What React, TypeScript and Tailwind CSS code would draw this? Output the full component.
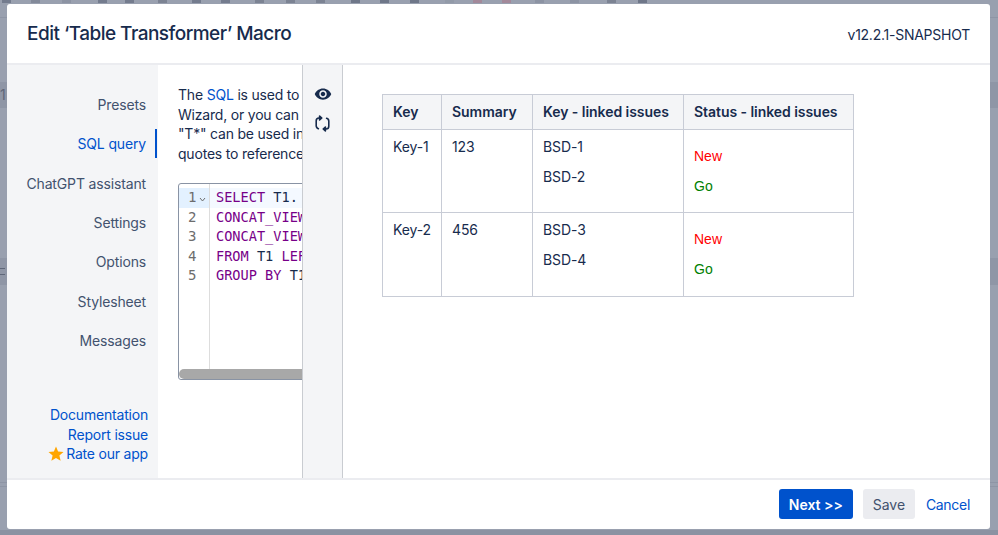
import { MdStar, MdVisibility } from "react-icons/md";

const navItems = ["Presets", "SQL query", "ChatGPT assistant", "Settings", "Options", "Stylesheet", "Messages"];

const codeLines = [
  [["SELECT", "text-[#770088]"], [" T1.", "text-[#172b4d]"]],
  [["CONCAT_VIEW", "text-[#770088]"]],
  [["CONCAT_VIEW", "text-[#770088]"]],
  [["FROM", "text-[#770088]"], [" T1 ", "text-[#172b4d]"], ["LEFT", "text-[#770088]"]],
  [["GROUP BY", "text-[#770088]"], [" T1", "text-[#172b4d]"]],
];

const rows = [
  { key: "Key-1", summary: "123", linked: ["BSD-1", "BSD-2"], height: "h-[83px]" },
  { key: "Key-2", summary: "456", linked: ["BSD-3", "BSD-4"], height: "h-[84px]" },
];

// page toolbar showing through the overlay above the dialog
const toolbarIcons = [
  "ml-[2px] bg-[#747c8e]",
  "ml-[20px] bg-[#838a9a]",
  "ml-[22px] bg-[#8c93a3]",
  "ml-[27px] bg-[#747c8e]",
  "ml-[18px] bg-[#747c8e]",
  "ml-[24px] bg-[#7c8393]",
  "ml-[25px] bg-[#747c8e]",
  "ml-[20px] bg-[#747c8e]",
  "ml-[25px] bg-[#7c8393]",
  "ml-[22px] bg-[#7c8393]",
  "ml-[21px] bg-[#7c8393]",
  "ml-[26px] bg-[#6f7789]",
  "ml-[20px] bg-[#6f7789]",
  "ml-[21px] bg-[#6f7789]",
  "ml-[26px] bg-[#929aa8]",
  "ml-[19px] bg-[#a3899a]",
  "ml-[20px] bg-[#a3899a]",
  "ml-[24px] bg-[#8c93a3]",
  "ml-[26px] bg-[#8c93a3]",
  "ml-[28px] bg-[#7c8393]",
  "ml-[22px] bg-[#6f7789]",
];

function SyncIcon() {
  return (
    <svg width="15" height="17" viewBox="0 0 15 17" fill="none" stroke="#172b4d" strokeWidth="1.6" strokeLinecap="round" strokeLinejoin="round">
      <path d="M6 3H4C2.4 3 1.2 4.2 1.2 5.8v5c0 1.4.8 2.5 2.2 2.9" />
      <path d="M4.6 1 6.8 3 4.6 5Z" fill="#172b4d" />
      <path d="M9 14h2c1.6 0 2.8-1.2 2.8-2.8v-5c0-1.4-.8-2.5-2.2-2.9" />
      <path d="M10.4 16 8.2 14l2.2-2Z" fill="#172b4d" />
    </svg>
  );
}

function Backdrop() {
  return (
    <>
      <div className="absolute left-0 top-0 flex h-[4px] w-full overflow-hidden">
        {toolbarIcons.map((c, i) => (
          <div key={i} className={`h-[3px] w-[9px] shrink-0 ${c}`} />
        ))}
      </div>
      <div className="absolute left-0 top-[17px] h-px w-full bg-[#8e95a5]" />
      <div className="absolute left-0 top-[82px] flex h-[26px] w-full items-center justify-between bg-[#8f96a6]">
        <span className="text-[14px] leading-[14px] text-[#5f6779]">1</span>
      </div>
      <div className="absolute left-0 top-[258px] flex h-[27px] w-full items-center bg-[#8f96a6]">
        <div className="h-[7px] w-[5px] border-y border-[#5f6779]" />
      </div>
      <div className="absolute left-0 top-[482px] h-[5px] w-full border-y border-[#8e95a5]" />
      <div className="absolute bottom-0 left-0 h-[5px] w-full bg-[#8b92a2]" />
    </>
  );
}

export default function App() {
  return (
    <div className="relative h-[535px] w-[998px] overflow-hidden bg-[#99a0af] pl-[7px] pt-[4px] font-['Inter',sans-serif] text-[14px] text-[#172b4d]">
      <Backdrop />
      <div className="relative flex h-[525px] w-[983px] flex-col overflow-hidden rounded-[3px] bg-white">
        <header className="flex h-[61px] shrink-0 items-center justify-between border-b-2 border-[#ebecf0] pl-[20px] pr-[20px] pt-[1px]">
          <h1 className="text-[19px] font-medium tracking-[-0.52px] text-[#172b4d]">Edit ‘Table Transformer’ Macro</h1>
          <span className="text-[14px] tracking-[-0.25px]">v12.2.1-SNAPSHOT</span>
        </header>

        <div className="flex min-h-0 flex-1">
          <nav className="flex w-[151px] shrink-0 flex-col justify-between bg-[#f4f5f7] pb-[14px] pr-[1px] text-right">
            <ul className="pt-[20px]">
              {navItems.map((item) => {
                const active = item === "SQL query";
                return (
                  <li
                    key={item}
                    className={`relative flex h-[39.3px] items-center justify-end pr-[11px] tracking-[-0.15px] ${
                      active ? "text-[#0052cc]" : "text-[#42526e]"
                    }`}
                  >
                    {item}
                    {active && <span className="absolute right-0 top-[5px] h-[29px] w-[2px] bg-[#0052cc]" />}
                  </li>
                );
              })}
            </ul>
            <div className="flex flex-col items-end pr-[9px] leading-[19.6px] tracking-[-0.2px] text-[#0052cc]">
              <a>Documentation</a>
              <a>Report issue</a>
              <a className="flex items-center">
                <MdStar className="mr-[1px] text-[18px] text-[#ffa500]" />
                Rate our app
              </a>
            </div>
          </nav>

          <section className="w-[144px] shrink-0 overflow-hidden pl-[20px] pt-[20px]">
            <div className="whitespace-nowrap leading-[19.6px] tracking-[-0.2px]">
              <p>
                The <span className="text-[#0052cc]">SQL</span> is used to query
              </p>
              <p>Wizard, or you can write</p>
              <p>"T*" can be used in the</p>
              <p>quotes to reference</p>
            </div>
            <div className="mt-[20px] flex h-[197px] w-[200px] flex-col overflow-hidden rounded-[3px] border border-[#8993a4]">
              <div className="flex min-h-0 flex-1 font-['DejaVu_Sans_Mono',monospace] text-[13.6px] leading-[19.5px]">
                <div className="w-[31px] shrink-0 border-r border-[#ddd] pt-[4px] text-[14px] text-[#6d6d6d]">
                  {[1, 2, 3, 4, 5].map((n) => (
                    <div key={n} className={`relative pl-[9px] ${n === 1 ? "bg-[#e3f1ff]" : ""}`}>
                      {n}
                      {n === 1 && (
                        <svg className="absolute right-[3px] top-[9px]" width="7" height="5" viewBox="0 0 7 5" fill="none" stroke="#6d6d6d" strokeWidth="1">
                          <path d="M1 1l2.5 3L6 1" />
                        </svg>
                      )}
                    </div>
                  ))}
                </div>
                <div className="flex-1 whitespace-pre pt-[4px]">
                  {codeLines.map((line, i) => (
                    <div key={i} className={`pl-[6px] ${i === 0 ? "bg-[#f4f9ff]" : ""}`}>
                      {line.map(([text, color], j) => (
                        <span key={j} className={color}>
                          {text}
                        </span>
                      ))}
                    </div>
                  ))}
                </div>
              </div>
              <div className="h-[10px] shrink-0 rounded-full bg-[#a8a8a8]" />
            </div>
          </section>

          <aside className="flex w-[41px] shrink-0 flex-col items-center gap-[12px] border-x border-[#c9ccd1] bg-[#f4f5f7] pt-[20px]">
            <MdVisibility className="text-[18px] text-[#172b4d]" />
            <SyncIcon />
          </aside>

          <main className="flex-1 pl-[39px] pt-[29px]">
            <table className="w-[472px] table-fixed border-collapse border border-[#c8ccd6] leading-[20px]">
              <colgroup>
                <col className="w-[59px]" />
                <col className="w-[91px]" />
                <col className="w-[151px]" />
                <col />
              </colgroup>
              <thead>
                <tr className="h-[35px] bg-[#f4f5f7] font-semibold">
                  {["Key", "Summary", "Key - linked issues", "Status - linked issues"].map((h) => (
                    <th key={h} className="whitespace-nowrap border border-[#c8ccd6] px-[10px] pb-[1px] text-left font-semibold tracking-[-0.05px]">
                      {h}
                    </th>
                  ))}
                </tr>
              </thead>
              <tbody>
                {rows.map((row) => (
                  <tr key={row.key} className={`${row.height} align-top`}>
                    <td className="whitespace-nowrap border border-[#c8ccd6] px-[10px] pt-[7px] tracking-[-0.1px]">{row.key}</td>
                    <td className="border border-[#c8ccd6] px-[10px] pt-[7px] tracking-[-0.1px]">{row.summary}</td>
                    <td className="border border-[#c8ccd6] px-[10px] pt-[7px] tracking-[-0.1px]">
                      <p>{row.linked[0]}</p>
                      <p className="mt-[10px]">{row.linked[1]}</p>
                    </td>
                    <td className="border border-[#c8ccd6] px-[10px] pt-[16px] font-['Liberation_Sans',sans-serif]">
                      <p className="text-[#ff0000]">New</p>
                      <p className="mt-[10px] text-[#008000]">Go</p>
                    </td>
                  </tr>
                ))}
              </tbody>
            </table>
          </main>
        </div>

        <footer className="flex h-[51px] shrink-0 items-center justify-end border-t-2 border-[#ebecf0] pb-[1px] pr-[20px]">
          <button className="mr-[10px] h-[30px] w-[74px] rounded-[3px] bg-[#0052cc] font-semibold text-white">Next &gt;&gt;</button>
          <button className="mr-[11px] h-[30px] w-[52px] rounded-[3px] bg-[#ebecf0] text-[#42526e]">Save</button>
          <button className="tracking-[-0.3px] text-[#0052cc]">Cancel</button>
        </footer>
      </div>
    </div>
  );
}
